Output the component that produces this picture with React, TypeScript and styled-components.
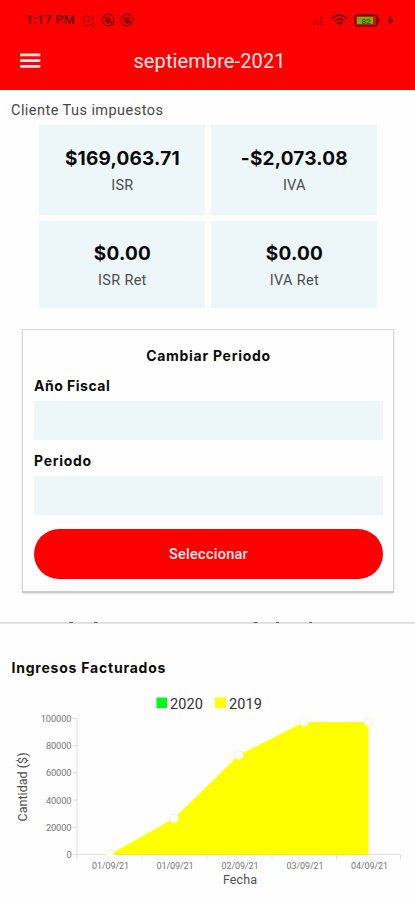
import React from "react";
import styled, { createGlobalStyle } from "styled-components";

const GlobalStyle = createGlobalStyle`
  * { box-sizing: border-box; }
  body { margin: 0; background: #fefefe; font-family: Roboto, "Liberation Sans", sans-serif; }
`;

const Screen = styled.div`
  width: 415px;
  height: 900px;
  overflow: hidden;
  display: flex;
  flex-direction: column;
  background: #fefefe;
  color: #111;
`;

const Header = styled.header`
  height: 90px;
  flex: none;
  background: #ff0000;
`;

const StatusBar = styled.div`
  height: 40px;
  padding: 0 21px 0 26px;
  display: flex;
  align-items: center;
  justify-content: space-between;
`;

const StatusGroup = styled.div<{ $gap: number }>`
  display: flex;
  align-items: center;
  gap: ${(p) => p.$gap}px;
`;

const Clock = styled.span`
  font: 500 12.5px/16px Roboto, sans-serif;
  letter-spacing: 0.35px;
  color: #5c0000;
  margin-right: 1px;
`;

const NavBar = styled.div`
  display: grid;
  grid-template-columns: 58px 1fr 58px;
  align-items: center;
  height: 42px;
`;

const MenuButton = styled.button`
  border: 0;
  padding: 0 0 0 20px;
  background: none;
  display: flex;
`;

const Title = styled.h1`
  margin: 0;
  padding-left: 4px;
  text-align: center;
  color: #ffe9e9;
  font: 400 20px/24px Roboto, sans-serif;
  letter-spacing: 0.1px;
  white-space: nowrap;
`;

const Client = styled.p`
  margin: 11px 0 4px 11px;
  font: 400 14.5px/20px Roboto, sans-serif;
  letter-spacing: 0.45px;
  color: #484848;
`;

const Tiles = styled.section`
  display: grid;
  grid-template-columns: 166px 166px;
  grid-template-rows: 90px 87px;
  gap: 6px;
  margin-left: 39.4px;
`;

const Tile = styled.div<{ $raised?: boolean }>`
  background: #edf6f9;
  display: flex;
  flex-direction: column;
  align-items: center;
  padding-top: ${(p) => (p.$raised ? 21 : 22)}px;
`;

const Amount = styled.strong`
  font: 700 19px/24px Inter, sans-serif;
  letter-spacing: 0.2px;
  color: #0a0a0a;
`;

const TileLabel = styled.span`
  margin-top: 5px;
  font: 400 14.5px/20px Roboto, sans-serif;
  letter-spacing: 0.3px;
  color: #4c4c4c;
`;

const Card = styled.section`
  width: 372px;
  height: 264px;
  margin: 21px 0 0 22px;
  padding: 16px 10px 0 11px;
  flex: none;
  border: 1px solid #d6d6d6;
  border-bottom: 2px solid #cbcbcb;
  box-shadow: 0 1px 2px rgba(0, 0, 0, 0.12);
`;

const Heading = styled.h2<{ $center?: boolean; $spacing: number }>`
  margin: 0;
  font: 700 14px/20px Inter, sans-serif;
  letter-spacing: ${(p) => p.$spacing}px;
  text-align: ${(p) => (p.$center ? "center" : "left")};
  color: #0c0c0c;
`;

const Field = styled.label`
  display: block;
  margin-top: 10px;
  & + & { margin-top: 11px; }
`;

const Select = styled.div`
  height: 39px;
  margin-top: 5px;
  background: #edf6f9;
`;

const Submit = styled.button`
  display: block;
  width: 100%;
  height: 50px;
  margin-top: 14px;
  padding: 1px 0 0;
  border: 0;
  border-radius: 25px;
  background: #ff0000;
  color: #fff0f0;
  font: 500 14.5px/20px Roboto, sans-serif;
  letter-spacing: 0.25px;
`;

const Divider = styled.div`
  height: 3px;
  flex: none;
  margin-top: 28px;
  display: flex;
`;

const ChartSection = styled.section`
  padding-top: 34px;
`;

const ChartHeading = styled.div`
  padding: 0 0 12px 11.5px;
`;

const Plot = styled.svg`
  display: block;
  font-family: Roboto, sans-serif;
`;

const AlarmIcon = () => (
  <svg width="15" height="15" viewBox="0 0 15 15" fill="none" stroke="#9c0000" strokeWidth="1.1">
    <circle cx="7.5" cy="8" r="5" />
    <path d="M1 4.3 3.8 1.7M14 4.3 11.2 1.7M7.5 5v3.2h2.4M4 12l-1.3 1.6M11 12l1.3 1.6" />
  </svg>
);

const MutedIcon = () => (
  <svg width="14" height="14" viewBox="0 0 14 14" fill="none" stroke="#7a0000" strokeWidth="1.2">
    <circle cx="7" cy="7" r="5.8" />
    <path d="M4.3 8.7c1-.6 0-4 2.7-4 1.4 0 2 .9 2 2.2 0 1 .3 1.5.8 1.9H5M3.3 3.4l7.3 7.3M6 10.2h2" />
  </svg>
);

const SignalIcon = () => (
  <svg width="17" height="12" viewBox="0 0 17 12" fill="#cf0000">
    <path d="M1 9h2v2H1zM4.7 7.3h2V11h-2zM8.3 5.5h2V11h-2zM12 2.5h3V11h-3z" />
  </svg>
);

const WifiIcon = () => (
  <svg width="17" height="13" viewBox="0 0 17 13" fill="none" stroke="#700000" strokeWidth="2">
    <path d="M1 4.6C5-.1 12-.1 16 4.6M3.7 7.2c2.6-2.9 7-2.9 9.6 0M6.2 9.6c1.3-1.4 3.3-1.4 4.6 0" />
    <circle cx="8.5" cy="11.2" r="1" fill="#700000" stroke="none" />
  </svg>
);

const BatteryIcon = () => (
  <svg width="27" height="13" viewBox="0 0 27 13">
    <rect x="1" y="1" width="22" height="11" rx="2.5" fill="#c71a00" stroke="#6c0000" strokeWidth="1.5" />
    <path d="M24 3.7 26.5 6.5 24 9.3z" fill="#6c0000" />
    <rect x="3" y="3" width="16" height="7" fill="#6fae16" />
    <text x="12" y="9.6" fontSize="8" fontWeight="700" textAnchor="middle" fill="#38600a">82</text>
  </svg>
);

const BoltIcon = () => (
  <svg width="7" height="11" viewBox="0 0 7 11" fill="#620000">
    <path d="M4.2.5.5 6h2.2L2.2 10.5 6.5 4.7H4z" />
  </svg>
);

const MenuIcon = () => (
  <svg width="21" height="16" viewBox="0 0 21 16" fill="#ffe4e4">
    <path d="M0 .5h20.3v2.7H0zM0 6.2h20.3v2.7H0zM0 12h20.3v2.700H0z" />
  </svg>
);

const totals = [
  ["$169,063.71", "ISR"],
  ["-$2,073.08", "IVA"],
  ["$0.00", "ISR Ret"],
  ["$0.00", "IVA Ret"],
];

const base = 164.5;
const points = [
  { x: 109.5, y: base, label: "01/09/21" },
  { x: 174, y: 128.5, label: "01/09/21" },
  { x: 239, y: 65, label: "02/09/21" },
  { x: 304, y: 32, label: "03/09/21" },
  { x: 368.5, y: 32, label: "04/09/21" },
];
const yTicks = [100000, 80000, 60000, 40000, 20000, 0].map((v) => ({
  v,
  y: base - (v / 100000) * 136,
}));
const xTicks = [77, 142, 207, 272, 336.5, 400.5];
const area = `M${points.map((p) => `${p.x} ${p.y}`).join("L")}V${base}H109.5Z`;

const IncomeChart = () => (
  <Plot width="415" height="210" viewBox="0 0 415 210">
    <rect x="156.5" y="7.5" width="10.5" height="10.5" fill="#00fa16" />
    <text x="170" y="18.5" fontSize="14.5" textLength="33" fill="#333">2020</text>
    <rect x="215" y="7.5" width="11" height="10.5" fill="#ffff00" />
    <text x="229" y="18.5" fontSize="14.5" textLength="33" fill="#333">2019</text>
    <path d={area} fill="#ffff00" />
    <g stroke="#dedede" strokeWidth="1" fill="none">
      <path d={`M77 28.5V${base}H400.5`} />
      {yTicks.map((t) => <path key={t.v} d={`M72.5 ${t.y}H77`} />)}
      {xTicks.map((x) => <path key={x} d={`M${x} ${base}v5`} />)}
    </g>
    <path d={`M109.5 ${base}H368.5`} stroke="#f4f000" />
    {points.map((p) => (
      <circle key={p.x} cx={p.x} cy={p.y} r="4.4" fill="#fff" stroke="#f6f6b5" strokeWidth="1" />
    ))}
    {yTicks.map((t) => (
      <text key={t.v} x="71.5" y={t.y + 3.5} fontSize="9.3" textAnchor="end" letterSpacing="-0.1" fill="#777">{t.v}</text>
    ))}
    {points.map((p) => (
      <text key={p.x} x={p.x + 1} y="178.5" fontSize="9" textAnchor="middle" textLength="37" fill="#777">{p.label}</text>
    ))}
    <text x="240" y="194" fontSize="12.5" textAnchor="middle" textLength="34" fill="#505050">Fecha</text>
    <text transform="translate(26.5 97) rotate(-90)" fontSize="12.5" textAnchor="middle" textLength="69" fill="#505050">Cantidad ($)</text>
  </Plot>
);

export default function App() {
  return (
    <Screen>
      <GlobalStyle />
      <Header>
        <StatusBar>
          <StatusGroup $gap={5}>
            <Clock>1:17 PM</Clock>
            <AlarmIcon />
            <MutedIcon />
            <MutedIcon />
          </StatusGroup>
          <StatusGroup $gap={6}>
            <SignalIcon />
            <WifiIcon />
            <BatteryIcon />
            <BoltIcon />
          </StatusGroup>
        </StatusBar>
        <NavBar>
          <MenuButton aria-label="Menu"><MenuIcon /></MenuButton>
          <Title>septiembre-2021</Title>
        </NavBar>
      </Header>
      <Client>Cliente Tus impuestos</Client>
      <Tiles>
        {totals.map(([amount, label], i) => (
          <Tile key={label} $raised={i > 1}>
            <Amount>{amount}</Amount>
            <TileLabel>{label}</TileLabel>
          </Tile>
        ))}
      </Tiles>
      <Card>
        <Heading $center $spacing={0.72}>Cambiar Periodo</Heading>
        <Field>
          <Heading as="span" $spacing={0.5}>Año Fiscal</Heading>
          <Select />
        </Field>
        <Field>
          <Heading as="span" $spacing={0.7}>Periodo</Heading>
          <Select />
        </Field>
        <Submit>Seleccionar</Submit>
      </Card>
      <Divider>
        <svg width="415" height="3" viewBox="0 0 415 3">
          <path d="M0 1.8H415" stroke="#dcdcdc" strokeWidth="1.8" />
          <path d="M69 1.5h4M94 1.5h3.5M253.5 1.5h4M276 1.5h3M309 1.5h3" stroke="#666" strokeWidth="1.2" />
        </svg>
      </Divider>
      <ChartSection>
        <ChartHeading>
          <Heading $spacing={0.78}>Ingresos Facturados</Heading>
        </ChartHeading>
        <IncomeChart />
      </ChartSection>
    </Screen>
  );
}
